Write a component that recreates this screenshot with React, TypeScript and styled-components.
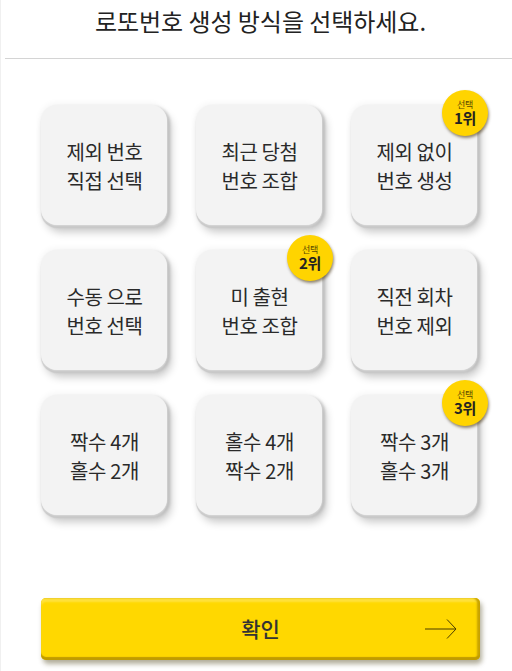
import React from 'react';
import styled, { createGlobalStyle } from 'styled-components';

const GlobalStyle = createGlobalStyle`
  html, body {
    margin: 0;
    padding: 0;
    background: #fff;
  }
  body {
    font-family: 'Noto Sans CJK KR', 'Noto Sans', sans-serif;
    color: #222;
  }
`;

const Page = styled.div`
  width: 512px;
  height: 671px;
  overflow: hidden;
  box-sizing: border-box;
  padding-left: 4px;
  border-left: 1px solid #f0f0f0;
`;

const Header = styled.header`
  height: 59px;
  box-sizing: border-box;
  border-bottom: 1px solid #d4d4d4;
  display: flex;
  justify-content: center;
  padding: 3px 0 0 4px;
`;

const Title = styled.h1`
  margin: 0;
  font-size: 24px;
  line-height: 36px;
  font-weight: 400;
  letter-spacing: -0.05px;
  color: #222;
`;

const Grid = styled.div`
  display: grid;
  grid-template-columns: repeat(3, 126px);
  grid-auto-rows: 120px;
  column-gap: 29px;
  row-gap: 25px;
  padding: 46px 0 0 36px;
`;

const Card = styled.div`
  position: relative;
  border-radius: 16px;
  background: #f3f3f3;
  box-shadow: 0 0 2px #f3f3f3, 0 3px 1px #c8c8c8, 3px 2px 3px #bdbdbd,
    4px 7px 8px rgba(0, 0, 0, 0.22), -1px -2px 6px rgba(0, 0, 0, 0.04);
  display: flex;
  align-items: center;
  justify-content: center;
  text-align: center;
  padding: 2px 0 0 1px;
  box-sizing: border-box;
`;

const CardLabel = styled.div`
  font-size: 20px;
  line-height: 29px;
  letter-spacing: -0.4px;
  font-weight: 400;
  color: #2a2a2a;
  white-space: pre-line;
`;

const Badge = styled.div`
  position: absolute;
  top: -15px;
  right: -11px;
  width: 46px;
  height: 46px;
  box-sizing: border-box;
  padding-bottom: 3px;
  border-radius: 50%;
  background: #ffd400;
  box-shadow: 1px 2px 3px rgba(60, 40, 0, 0.55);
  display: flex;
  flex-direction: column;
  align-items: center;
  justify-content: center;
  color: #222;
`;

const BadgeTop = styled.span`
  font-size: 9px;
  line-height: 11px;
  letter-spacing: -0.3px;
  color: #5a4a00;
`;

const BadgeRank = styled.span`
  font-size: 15px;
  line-height: 15px;
  font-weight: 700;
  letter-spacing: -0.4px;
`;

const ConfirmButton = styled.button`
  position: relative;
  display: flex;
  align-items: center;
  justify-content: center;
  width: 439px;
  height: 62px;
  margin: 83px 0 0 36px;
  padding: 0 0 2px;
  border: 0;
  border-radius: 5px;
  background: #ffd800;
  font-family: inherit;
  font-size: 21px;
  font-weight: 500;
  color: #333;
  box-shadow: inset 0 -3px 1px #c09c00, inset -3px 0 2px #c9a400,
    inset 0 4px 2px #ffe23d, 2px 4px 5px rgba(60, 50, 0, 0.4);
`;

const ArrowIcon = styled.svg`
  position: absolute;
  right: 23px;
  top: 21px;
`;

const options = [
  { label: '제외 번호\n직접 선택' },
  { label: '최근 당첨\n번호 조합' },
  { label: '제외 없이\n번호 생성', rank: 1 },
  { label: '수동 으로\n번호 선택' },
  { label: '미 출현\n번호 조합', rank: 2 },
  { label: '직전 회차\n번호 제외' },
  { label: '짝수 4개\n홀수 2개' },
  { label: '홀수 4개\n짝수 2개' },
  { label: '짝수 3개\n홀수 3개', rank: 3 },
];

export default function App() {
  return (
    <Page>
      <GlobalStyle />
      <Header>
        <Title>로또번호 생성 방식을 선택하세요.</Title>
      </Header>
      <Grid>
        {options.map((option) => (
          <Card key={option.label}>
            <CardLabel>{option.label}</CardLabel>
            {option.rank && (
              <Badge>
                <BadgeTop>선택</BadgeTop>
                <BadgeRank>{option.rank}위</BadgeRank>
              </Badge>
            )}
          </Card>
        ))}
      </Grid>
      <ConfirmButton>
        확인
        <ArrowIcon width="32" height="20" viewBox="0 0 32 20" fill="none">
          <path d="M0 10H31M22 .5L31 10L22 19.5" stroke="#4a3c00" strokeWidth="1" />
        </ArrowIcon>
      </ConfirmButton>
    </Page>
  );
}
